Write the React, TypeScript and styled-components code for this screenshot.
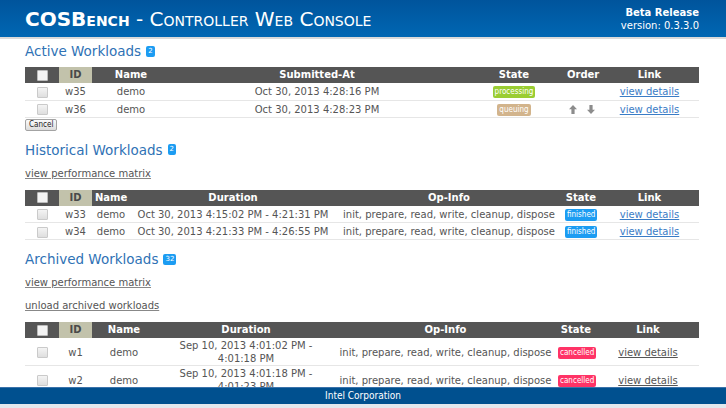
import styled, { createGlobalStyle } from 'styled-components';

const GlobalStyle = createGlobalStyle`
  html, body { margin: 0; padding: 0; overflow: hidden; background: #fff; }
  body {
    font-family: "DejaVu Sans", Verdana, sans-serif;
    font-size: 10px;
    color: #555;
  }
`;

const Header = styled.header`
  height: 37px;
  display: flex;
  align-items: center;
  justify-content: space-between;
  padding: 0 27px 0 25px;
  background: linear-gradient(#00549c, #0067b3);
  border-bottom: 2px solid #dadada;
  color: #fff;
`;

const Title = styled.h1`
  margin: 0;
  font-size: 20px;
  font-weight: normal;
  font-variant: small-caps;
  line-height: 1;
  white-space: nowrap;

  b { font-weight: bold; }
`;

const Release = styled.div`
  display: flex;
  flex-direction: column;
  align-items: flex-end;
  font-size: 10px;
  line-height: 13px;

  strong { font-weight: bold; }
`;

const Main = styled.main`
  padding: 0 27px 0 25px;
`;

const SectionTitle = styled.h2<{ $gap: number }>`
  margin: ${({ $gap }) => $gap}px 0 0;
  font-size: 13.5px;
  font-weight: normal;
  line-height: 16px;
  color: #2f72b5;
  display: flex;
  align-items: center;
`;

const Count = styled.span`
  display: inline-block;
  margin-left: 5px;
  padding: 0 2px;
  height: 11px;
  line-height: 11px;
  border-radius: 2px;
  background: #1c9cf2;
  color: #fff;
  font-size: 7px;
`;

const PlainLink = styled.a<{ $gap: number }>`
  display: block;
  width: max-content;
  margin-top: ${({ $gap }) => $gap}px;
  line-height: 12px;
  font-size: 10px;
  color: #555;
  text-decoration: underline;
  text-decoration-color: #888;
`;

const Table = styled.table<{ $gap: number }>`
  width: 100%;
  margin-top: ${({ $gap }) => $gap}px;
  border-collapse: collapse;
  table-layout: fixed;
`;

const Col = styled.col<{ $w: number }>`
  width: ${({ $w }) => $w}px;
`;

const Th = styled.th<{ $id?: boolean }>`
  height: 16px;
  padding: 0 3px;
  background: ${({ $id }) => ($id ? '#c2c2ab' : '#555')};
  color: ${({ $id }) => ($id ? '#4a4a4a' : '#fff')};
  font-size: 10px;
  font-weight: bold;
  text-align: center;
  line-height: 16px;
  white-space: nowrap;
`;

const Tr = styled.tr`
  height: 17px;
`;

const Td = styled.td`
  padding: 1px 3px 0;
  border-bottom: 1px solid #e6e6e6;
  text-align: center;
  vertical-align: middle;
  line-height: 13px;
  color: #555;
`;

const Check = styled.span<{ $head?: boolean }>`
  display: inline-block;
  vertical-align: middle;
  width: 11px;
  height: 11px;
  box-sizing: border-box;
  border: 1px solid ${({ $head }) => ($head ? '#bbb' : '#cacaca')};
  border-radius: 1px;
  background: ${({ $head }) =>
    $head ? '#f3f3f3' : 'linear-gradient(#f4f4f4, #dedede)'};
`;

const State = styled.span<{ $bg: string }>`
  display: inline-block;
  padding: 0 2px;
  height: 12px;
  line-height: 12px;
  border-radius: 2px;
  background: ${({ $bg }) => $bg};
  color: #fff;
  font-family: "DejaVu Sans Condensed", "DejaVu Sans", sans-serif;
  font-size: 8px;
  vertical-align: middle;
`;

const Detail = styled.a<{ $muted?: boolean }>`
  color: ${({ $muted }) => ($muted ? '#555' : '#3a7cc6')};
  text-decoration: underline;
`;

const OrderBox = styled.span`
  display: inline-flex;
  gap: 10px;
  align-items: center;
  vertical-align: middle;
`;

const CancelButton = styled.button`
  display: block;
  margin-top: 1px;
  height: 12px;
  padding: 0 3px;
  border: 1px solid #a3a3a3;
  border-radius: 2px;
  background: linear-gradient(#fbfbfb, #dcdcdc);
  color: #222;
  font-family: "DejaVu Sans Condensed", "DejaVu Sans", sans-serif;
  font-size: 8px;
  line-height: 10px;
`;

const Footer = styled.footer`
  position: fixed;
  left: 0;
  right: 0;
  bottom: 0;
  height: 16px;
  line-height: 16px;
  background: #00508f;
  border-top: 1px solid #3a72aa;
  border-bottom: 4px solid #e2e8ee;
  color: #fff;
  text-align: center;
  font-family: "DejaVu Sans Condensed", "DejaVu Sans", sans-serif;
  font-size: 10px;
`;

const Arrow = ({ down }: { down?: boolean }) => (
  <svg width="8" height="9" viewBox="0 0 8 9">
    <path
      d="M4 0 L8 4.2 H5.6 V9 H2.4 V4.2 H0 Z"
      fill="#8c8c8c"
      transform={down ? 'rotate(180 4 4.5)' : undefined}
    />
  </svg>
);

const STATE_COLORS: Record<string, string> = {
  processing: '#9acd32',
  queuing: '#d2b48c',
  finished: '#1c9cf2',
  cancelled: '#ff3366',
};

const OPS = 'init, prepare, read, write, cleanup, dispose';

const active = [
  { id: 'w35', at: 'Oct 30, 2013 4:28:16 PM', state: 'processing', order: false },
  { id: 'w36', at: 'Oct 30, 2013 4:28:23 PM', state: 'queuing', order: true },
];

const historical = [
  { id: 'w33', dur: 'Oct 30, 2013 4:15:02 PM - 4:21:31 PM' },
  { id: 'w34', dur: 'Oct 30, 2013 4:21:33 PM - 4:26:55 PM' },
];

const archived = [
  { id: 'w1', dur: 'Sep 10, 2013 4:01:02 PM - 4:01:18 PM' },
  { id: 'w2', dur: 'Sep 10, 2013 4:01:18 PM - 4:01:23 PM' },
];

const HeadRow = ({ cols }: { cols: string[] }) => (
  <tr>
    <Th><Check $head /></Th>
    <Th $id>ID</Th>
    {cols.map((c) => <Th key={c}>{c}</Th>)}
  </tr>
);

const App = () => (
  <>
    <GlobalStyle />
    <Header>
      <Title><b>COSBench</b> - Controller Web Console</Title>
      <Release>
        <strong>Beta Release</strong>
        <span>version: 0.3.3.0</span>
      </Release>
    </Header>

    <Main>
      <SectionTitle $gap={4}>Active Workloads <Count>2</Count></SectionTitle>
      <Table $gap={8}>
        <colgroup>
          {[34, 33, 78, 294, 100, 36, 99].map((w, i) => <Col key={i} $w={w} />)}
        </colgroup>
        <thead>
          <HeadRow cols={['Name', 'Submitted-At', 'State', 'Order', 'Link']} />
        </thead>
        <tbody>
          {active.map((r) => (
            <Tr key={r.id}>
              <Td><Check /></Td>
              <Td>{r.id}</Td>
              <Td>demo</Td>
              <Td>{r.at}</Td>
              <Td><State $bg={STATE_COLORS[r.state]}>{r.state}</State></Td>
              <Td>
                {r.order && (
                  <OrderBox><Arrow /><Arrow down /></OrderBox>
                )}
              </Td>
              <Td><Detail href="#">view details</Detail></Td>
            </Tr>
          ))}
        </tbody>
      </Table>
      <CancelButton>Cancel</CancelButton>

      <SectionTitle $gap={11}>Historical Workloads <Count>2</Count></SectionTitle>
      <PlainLink $gap={10} href="#">view performance matrix</PlainLink>
      <Table $gap={10}>
        <colgroup>
          {[34, 33, 38, 206, 226, 38, 99].map((w, i) => <Col key={i} $w={w} />)}
        </colgroup>
        <thead>
          <HeadRow cols={['Name', 'Duration', 'Op-Info', 'State', 'Link']} />
        </thead>
        <tbody>
          {historical.map((r) => (
            <Tr key={r.id}>
              <Td><Check /></Td>
              <Td>{r.id}</Td>
              <Td>demo</Td>
              <Td>{r.dur}</Td>
              <Td>{OPS}</Td>
              <Td><State $bg={STATE_COLORS.finished}>finished</State></Td>
              <Td><Detail href="#">view details</Detail></Td>
            </Tr>
          ))}
        </tbody>
      </Table>

      <SectionTitle $gap={11}>Archived Workloads <Count>32</Count></SectionTitle>
      <PlainLink $gap={10} href="#">view performance matrix</PlainLink>
      <PlainLink $gap={11} href="#">unload archived workloads</PlainLink>
      <Table $gap={10}>
        <colgroup>
          {[34, 33, 64, 180, 219, 42, 102].map((w, i) => <Col key={i} $w={w} />)}
        </colgroup>
        <thead>
          <HeadRow cols={['Name', 'Duration', 'Op-Info', 'State', 'Link']} />
        </thead>
        <tbody>
          {archived.map((r) => (
            <Tr key={r.id}>
              <Td><Check /></Td>
              <Td>{r.id}</Td>
              <Td>demo</Td>
              <Td>{r.dur}</Td>
              <Td>{OPS}</Td>
              <Td><State $bg={STATE_COLORS.cancelled}>cancelled</State></Td>
              <Td><Detail $muted href="#">view details</Detail></Td>
            </Tr>
          ))}
        </tbody>
      </Table>
    </Main>

    <Footer>Intel Corporation</Footer>
  </>
);

export default App;
